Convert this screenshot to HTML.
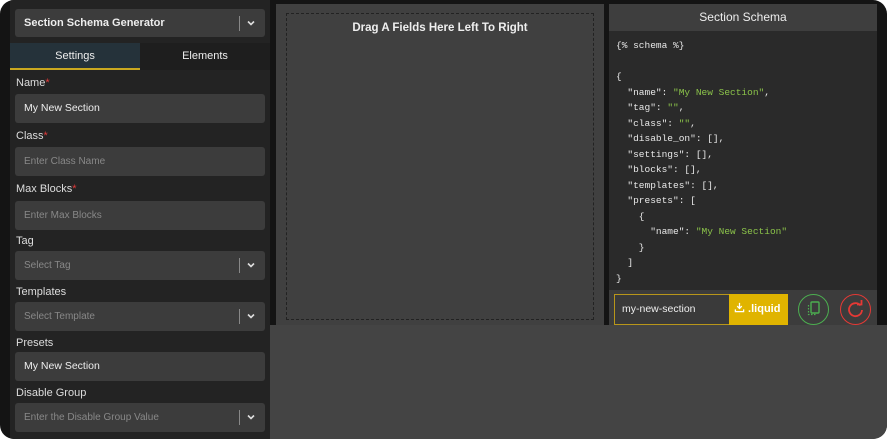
<!DOCTYPE html><html><head><style>
*{box-sizing:border-box;margin:0;padding:0}
body{width:887px;height:439px;background:#fff;font-family:"Liberation Sans",sans-serif;position:relative;overflow:hidden}
.frame{position:absolute;left:0;top:0;width:887px;height:439px;background:#141414;border-radius:14px;overflow:hidden}
.abs{position:absolute}
.left{left:10px;top:0;width:260px;height:439px;background:#232323}
.fld{position:absolute;left:15px;width:250px;height:29px;background:#3c3c3c;border-radius:3px;font-size:10px;color:#888;padding-left:9px;line-height:29px}
.fld.v{color:#eee;font-size:10.5px}
.lbl{position:absolute;left:16px;font-size:11px;color:#ddd}
.lbl b{color:#e03a3a;font-weight:normal}
.sel:after{content:"";position:absolute;right:25px;top:7px;width:1px;height:15px;background:#888}
.chev{position:absolute;right:9px;top:9px;width:10px;height:10px}
.code{left:609px;top:31px;width:268px;height:259px;background:#2a2a2a;font-family:"Liberation Mono",monospace;font-size:9.5px;color:#e8e8e8;white-space:pre;line-height:15.5px;padding:7px 0 0 7px}
.g{color:#8bc34a}
</style></head><body><div class="frame">
<div class="abs left"></div>
<div class="fld v sel" style="top:9px;height:28px;font-weight:bold;font-size:11px;line-height:28px;color:#eee">Section Schema Generator<svg class="chev" viewBox="0 0 10 10"><path d="M2 3.5L5 6.5L8 3.5" stroke="#ddd" stroke-width="1.6" fill="none"/></svg></div>
<div class="abs" style="left:10px;top:43px;width:130px;height:27px;background:#25323a;border-bottom:2px solid #c9a820;color:#eee;font-size:11px;text-align:center;line-height:26px">Settings</div>
<div class="abs" style="left:140px;top:43px;width:130px;height:27px;background:#1e1e1e;color:#eee;font-size:11px;text-align:center;line-height:26px">Elements</div>
<div class="lbl" style="top:77px">Name<b>*</b></div>
<div class="fld v" style="top:94px">My New Section</div>
<div class="lbl" style="top:130px">Class<b>*</b></div>
<div class="fld" style="top:147px">Enter Class Name</div>
<div class="lbl" style="top:183px">Max Blocks<b>*</b></div>
<div class="fld" style="top:201px">Enter Max Blocks</div>
<div class="lbl" style="top:235px">Tag</div>
<div class="fld sel" style="top:251px">Select Tag<svg class="chev" viewBox="0 0 10 10"><path d="M2 3.5L5 6.5L8 3.5" stroke="#ddd" stroke-width="1.6" fill="none"/></svg></div>
<div class="lbl" style="top:286px">Templates</div>
<div class="fld sel" style="top:302px">Select Template<svg class="chev" viewBox="0 0 10 10"><path d="M2 3.5L5 6.5L8 3.5" stroke="#ddd" stroke-width="1.6" fill="none"/></svg></div>
<div class="lbl" style="top:337px">Presets</div>
<div class="fld v" style="top:352px">My New Section</div>
<div class="lbl" style="top:387px">Disable Group</div>
<div class="fld sel" style="top:403px">Enter the Disable Group Value<svg class="chev" viewBox="0 0 10 10"><path d="M2 3.5L5 6.5L8 3.5" stroke="#ddd" stroke-width="1.6" fill="none"/></svg></div>

<div class="abs" style="left:270px;top:325px;width:617px;height:114px;background:#444"></div>
<div class="abs" style="left:276px;top:4px;width:328px;height:321px;background:#404040"></div>
<div class="abs" style="left:286px;top:13px;width:308px;height:307px;border:1px dashed #222"></div>
<div class="abs" style="left:276px;top:22px;width:328px;text-align:center;color:#eee;font-weight:bold;font-size:11.5px">Drag A Fields Here Left To Right</div>

<div class="abs" style="left:609px;top:4px;width:268px;height:27px;background:#3e3e3e;color:#eee;font-size:12px;text-align:center;line-height:27px">Section Schema</div>
<div class="abs code">{% schema %}

{
  "name": <span class="g">"My New Section"</span>,
  "tag": <span class="g">""</span>,
  "class": <span class="g">""</span>,
  "disable_on": [],
  "settings": [],
  "blocks": [],
  "templates": [],
  "presets": [
    {
      "name": <span class="g">"My New Section"</span>
    }
  ]
}</div>
<div class="abs" style="left:609px;top:290px;width:268px;height:35px;background:#3c3c3c"></div>
<div class="abs" style="left:614px;top:294px;width:116px;height:31px;border:1px solid #b8961a;border-right:none;background:#3a3a3a;color:#eee;font-size:10.5px;line-height:29px;padding-left:7px">my-new-section</div>
<div class="abs" style="left:729px;top:294px;width:59px;height:31px;background:#e0b400;color:#fff;font-weight:bold;font-size:11px;line-height:31px;padding-left:5px"><svg width="11" height="11" viewBox="0 0 12 12" style="vertical-align:-1px"><path d="M6 1v6M3.5 4.5L6 7l2.5-2.5M1.5 8v2.5h9V8" stroke="#fff" stroke-width="1.4" fill="none"/></svg> .liquid</div>
<div class="abs" style="left:798px;top:294px;width:31px;height:31px;border:1px solid #4caf50;border-radius:50%"><svg width="31" height="31" viewBox="0 0 31 31" style="position:absolute;left:-1px;top:-1px"><rect x="13" y="8" width="8" height="11" rx="1" stroke="#4caf50" stroke-width="1.4" fill="none"/><path d="M10.5 11v9.5h8" stroke="#4caf50" stroke-width="1.2" stroke-dasharray="1.5 1.5" fill="none"/></svg></div>
<div class="abs" style="left:840px;top:294px;width:31px;height:31px;border:1px solid #e53935;border-radius:50%"><svg width="31" height="31" viewBox="0 0 31 31" style="position:absolute;left:-1px;top:-1px"><path d="M20.5 11.5A6.5 6.5 0 1 0 22 16" stroke="#e53935" stroke-width="1.8" fill="none"/><path d="M17 10.5h4.5V6" stroke="#e53935" stroke-width="1.8" fill="none"/></svg></div>
</div></body></html>
